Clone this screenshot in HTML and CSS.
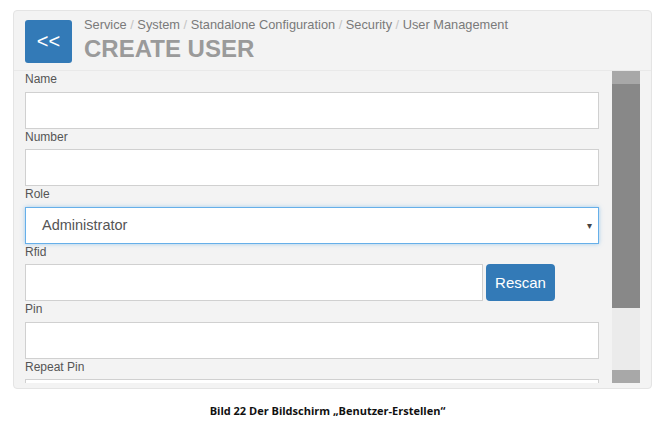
FILE: index.html
```html
<!DOCTYPE html>
<html>
<head>
<meta charset="utf-8">
<link rel="stylesheet" href="styles.css">
</head>
<body>
<div class="panel">
  <div class="header">
    <button class="back">&lt;&lt;</button>
    <div class="titles">
      <div class="crumbs">Service <span class="sep">/</span> System <span class="sep">/</span> Standalone Configuration <span class="sep">/</span> Security <span class="sep">/</span> User Management</div>
      <h1 class="title">CREATE USER</h1>
    </div>
  </div>
  <div class="body">
    <div class="form">
      <label class="lbl">Name</label>
      <div class="input"></div>
      <label class="lbl">Number</label>
      <div class="input"></div>
      <label class="lbl">Role</label>
      <div class="select"><span>Administrator</span><span class="caret">&#9662;</span></div>
      <label class="lbl">Rfid</label>
      <div class="row">
        <div class="input rfid"></div>
        <button class="rescan">Rescan</button>
      </div>
      <label class="lbl">Pin</label>
      <div class="input"></div>
      <label class="lbl">Repeat Pin</label>
      <div class="input"></div>
    </div>
    <div class="scrollbar">
      <div class="sb-arrow"></div>
      <div class="sb-thumb"></div>
      <div class="sb-track"></div>
      <div class="sb-arrow"></div>
    </div>
  </div>
</div>
<div class="caption">Bild 22 Der Bildschirm „Benutzer-Erstellen“</div>
</body>
</html>
```

FILE: styles.css
```css
html, body {
  margin: 0;
  padding: 0;
  background: #ffffff;
}
body {
  width: 665px;
  height: 422px;
  overflow: hidden;
  font-family: "Liberation Sans", Arial, sans-serif;
}
.panel {
  margin: 10px 0 0 13px;
  width: 637px;
  height: 377px;
  border: 1px solid #e4e4e4;
  border-radius: 4px;
  background: #f3f3f3;
  display: flex;
  flex-direction: column;
  overflow: hidden;
}
.header {
  display: flex;
  align-items: flex-start;
  gap: 12px;
  padding: 9px 0 0 11px;
  height: 50px;
  border-bottom: 1px solid #e9e9e9;
}
.back {
  width: 47px;
  height: 43px;
  border: none;
  border-radius: 3px;
  background: #337ab7;
  color: #ffffff;
  font-family: "Liberation Sans", Arial, sans-serif;
  font-size: 20px;
  padding: 0;
  line-height: 43px;
}
.titles {
  display: flex;
  flex-direction: column;
  margin-top: -3px;
}
.crumbs {
  font-size: 12.8px;
  color: #7a7a7a;
  line-height: 16px;
}
.sep {
  color: #c4c4c4;
}
.title {
  margin: 3px 0 0 0;
  font-size: 24px;
  font-weight: bold;
  color: #9a9a9a;
  line-height: 26px;
}
.body {
  display: flex;
  flex: 1;
  min-height: 0;
  padding-bottom: 5px;
}
.form {
  flex: 1;
  padding: 0 13px 0 11px;
  overflow: hidden;
  display: flex;
  flex-direction: column;
}
.lbl {
  display: block;
  font-size: 12px;
  color: #555555;
  height: 20.5px;
  line-height: 16px;
  flex: none;
}
.input {
  flex: none;
  height: 35px;
  background: #ffffff;
  border: 1px solid #d0d0d0;
}
.select {
  flex: none;
  height: 35px;
  background: #ffffff;
  border: 1px solid #66afe9;
  box-shadow: 0 0 4px rgba(102, 175, 233, 0.6);
  display: flex;
  align-items: center;
  justify-content: space-between;
  padding: 0 6px 0 16px;
  font-size: 14.5px;
  color: #555555;
}
.caret {
  font-size: 10px;
  color: #444444;
}
.row {
  display: flex;
  gap: 3px;
  flex: none;
}
.rfid {
  width: 456px;
}
.rescan {
  width: 69px;
  height: 37px;
  border: none;
  border-radius: 4px;
  background: #337ab7;
  color: #ffffff;
  font-family: "Liberation Sans", Arial, sans-serif;
  font-size: 15px;
  padding: 0;
}
.scrollbar {
  width: 28px;
  margin-right: 11px;
  display: flex;
  flex-direction: column;
}
.sb-arrow {
  height: 13px;
  background: #a8a8a8;
}
.sb-thumb {
  height: 224px;
  background: #888888;
}
.sb-track {
  flex: 1;
  background: #ebebeb;
}
.caption {
  width: 655px;
  margin-top: 14px;
  text-align: center;
  font-family: "Open Sans", "Liberation Sans", sans-serif;
  font-weight: bold;
  font-size: 11px;
  color: #111111;
}
```
